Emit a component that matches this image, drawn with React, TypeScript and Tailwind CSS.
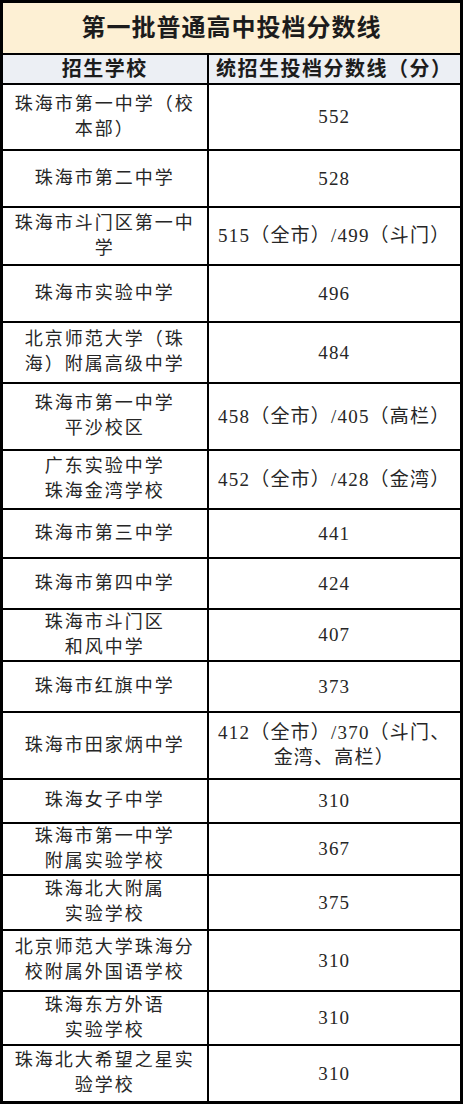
import { FC } from 'react';

type Row = {
  school: string[];
  score: string[];
  h: string;
};

const rows: Row[] = [
  { school: ['珠海市第一中学（校', '本部）'], score: ['552'], h: 'h-[66px]' },
  { school: ['珠海市第二中学'], score: ['528'], h: 'h-[57px]' },
  { school: ['珠海市斗门区第一中', '学'], score: ['515（全市）/499（斗门）'], h: 'h-[58px]' },
  { school: ['珠海市实验中学'], score: ['496'], h: 'h-[57px]' },
  { school: ['北京师范大学（珠', '海）附属高级中学'], score: ['484'], h: 'h-[61px]' },
  { school: ['珠海市第一中学', '平沙校区'], score: ['458（全市）/405（高栏）'], h: 'h-[67px]' },
  { school: ['广东实验中学', '珠海金湾学校'], score: ['452（全市）/428（金湾）'], h: 'h-[59px]' },
  { school: ['珠海市第三中学'], score: ['441'], h: 'h-[49px]' },
  { school: ['珠海市第四中学'], score: ['424'], h: 'h-[51px]' },
  { school: ['珠海市斗门区', '和风中学'], score: ['407'], h: 'h-[51px]' },
  { school: ['珠海市红旗中学'], score: ['373'], h: 'h-[51px]' },
  { school: ['珠海市田家炳中学'], score: ['412（全市）/370（斗门、', '金湾、高栏）'], h: 'h-[67px]' },
  { school: ['珠海女子中学'], score: ['310'], h: 'h-[44px]' },
  { school: ['珠海市第一中学', '附属实验学校'], score: ['367'], h: 'h-[52px]' },
  { school: ['珠海北大附属', '实验学校'], score: ['375'], h: 'h-[55px]' },
  { school: ['北京师范大学珠海分', '校附属外国语学校'], score: ['310'], h: 'h-[61px]' },
  { school: ['珠海东方外语', '实验学校'], score: ['310'], h: 'h-[54px]' },
  { school: ['珠海北大希望之星实', '验学校'], score: ['310'], h: 'h-[58px]' }
];

const Lines: FC<{ lines: string[] }> = ({ lines }) => (
  <>
    {lines.map((l, i) => (
      <div key={i}>{l}</div>
    ))}
  </>
);

const App: FC = () => {
  return (
    <div className="w-[464px] bg-white pb-[3px] font-['Liberation_Serif','Noto_Sans_CJK_SC',serif] text-[#262626]">
      <table className="w-[463px] border-collapse border-[3px] border-black">
        <colgroup>
          <col className="w-[206px]" />
          <col />
        </colgroup>
        <thead>
          <tr className="h-[52px] bg-[#fdf0d4]">
            <th
              colSpan={2}
              className="border-2 border-black text-center text-[24px] font-bold tracking-[1px] text-[#1c1c1c]">
              第一批普通高中投档分数线
            </th>
          </tr>
          <tr className="h-[30px] bg-[#eceff4]">
            <th className="border-2 border-black text-center text-[20px] font-bold leading-[24px] tracking-[1.5px] text-[#1c1c1c]">
              招生学校
            </th>
            <th className="border-2 border-black text-center text-[20px] font-bold leading-[24px] tracking-[1.5px] text-[#1c1c1c]">
              统招生投档分数线（分）
            </th>
          </tr>
        </thead>
        <tbody>
          {rows.map((r, i) => (
            <tr key={i} className={r.h}>
              <td className="border-2 border-black px-1 text-center text-[18px] leading-[25px] tracking-[2px]">
                <Lines lines={r.school} />
              </td>
              <td className="border-2 border-black px-1 text-center text-[19px] leading-[25px] tracking-[1.2px]">
                <Lines lines={r.score} />
              </td>
            </tr>
          ))}
        </tbody>
      </table>
    </div>
  );
};

export default App;
